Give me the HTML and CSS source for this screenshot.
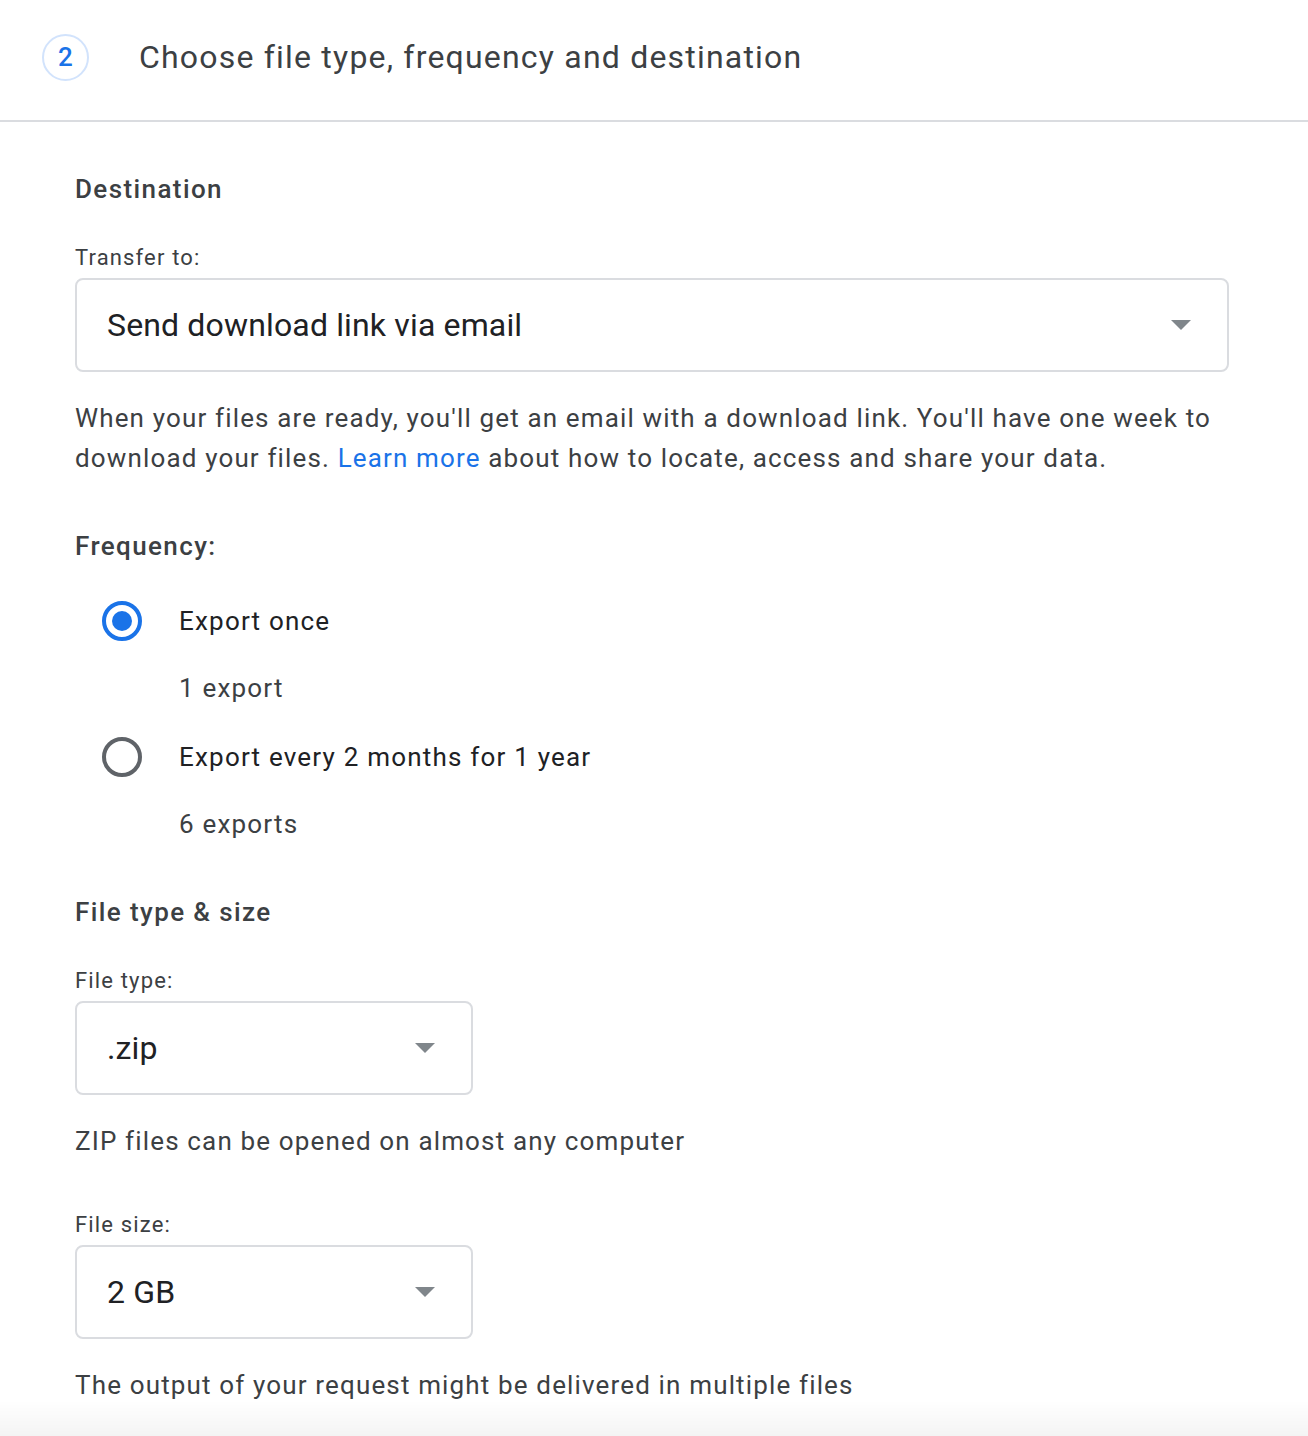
FILE: index.html
```html
<!DOCTYPE html>
<html lang="en">
<head>
<meta charset="utf-8">
<title>Choose file type, frequency and destination</title>
<link rel="stylesheet" href="styles.css">
</head>
<body>
<header class="step-header">
  <div class="step-num">2</div>
  <h1 class="step-title">Choose file type, frequency and destination</h1>
</header>
<main class="content">
  <h2 class="section-title">Destination</h2>
  <div class="field-label">Transfer to:</div>
  <div class="select select-wide">
    <span class="select-value">Send download link via email</span>
    <span class="caret"></span>
  </div>
  <p class="desc">When your files are ready, you'll get an email with a download link. You'll have one week to download your files. <a class="link" href="#">Learn more</a> about how to locate, access and share your data.</p>

  <h2 class="section-title freq-title">Frequency:</h2>
  <div class="radio-list">
    <div class="radio-row">
      <span class="radio radio-on"></span>
      <span class="radio-label">Export once</span>
    </div>
    <div class="radio-sub">1 export</div>
    <div class="radio-row">
      <span class="radio"></span>
      <span class="radio-label">Export every 2 months for 1 year</span>
    </div>
    <div class="radio-sub">6 exports</div>
  </div>

  <h2 class="section-title type-title">File type &amp; size</h2>
  <div class="field-label">File type:</div>
  <div class="select select-narrow">
    <span class="select-value">.zip</span>
    <span class="caret"></span>
  </div>
  <p class="desc">ZIP files can be opened on almost any computer</p>

  <div class="field-label size-label">File size:</div>
  <div class="select select-narrow">
    <span class="select-value">2 GB</span>
    <span class="caret"></span>
  </div>
  <p class="desc">The output of your request might be delivered in multiple files</p>
</main>
<div class="bottom-shade"></div>
</body>
</html>
```

FILE: styles.css
```css
* { box-sizing: border-box; }
html, body { margin: 0; padding: 0; background: #fff; }
body {
  font-family: Roboto, "Noto Sans", Arial, sans-serif;
  color: #3c4043;
  width: 1308px;
  min-height: 1436px;
}
.step-header {
  height: 122px;
  display: flex;
  align-items: center;
  padding-left: 42px;
  border-bottom: 2px solid #dadce0;
  padding-bottom: 6px;
}
.step-num {
  width: 47px;
  height: 47px;
  border: 2px solid #d2e3fc;
  border-radius: 50%;
  display: flex;
  align-items: center;
  justify-content: center;
  color: #1a73e8;
  font-size: 26px;
  font-weight: 500;
}
.step-title {
  margin: 0 0 0 50px;
  font-size: 32px;
  font-weight: 400;
  color: #3c4043;
  letter-spacing: 1.2px;
}
.content {
  padding: 49px 79px 0 75px;
}
.section-title {
  margin: 0;
  font-size: 26px;
  line-height: 36px;
  font-weight: 500;
  color: #3c4043;
  letter-spacing: 1.4px;
}
.field-label {
  margin-top: 35px;
  font-size: 22px;
  line-height: 32px;
  color: #3c4043;
  letter-spacing: 1.15px;
}
.select {
  margin-top: 4px;
  height: 94px;
  border: 2px solid #dadce0;
  border-radius: 8px;
  display: flex;
  align-items: center;
  justify-content: space-between;
  padding: 0 36px 0 30px;
}
.select-wide { width: 1154px; }
.select-narrow { width: 398px; }
.select-value {
  font-size: 32px;
  color: #202124;
  letter-spacing: 0.15px;
}
.caret {
  width: 0;
  height: 0;
  border-left: 10px solid transparent;
  border-right: 10px solid transparent;
  border-top: 10px solid #80868b;
}
.desc {
  margin: 26px 0 0;
  font-size: 26px;
  line-height: 40px;
  color: #3c4043;
  letter-spacing: 1.15px;
}
.link { color: #1a73e8; text-decoration: none; }
.freq-title { margin-top: 50px; }
.radio-list {
  margin-top: 33px;
  padding-left: 27px;
}
.radio-row {
  display: flex;
  align-items: center;
  height: 48px;
}
.radio {
  width: 40px;
  height: 40px;
  border: 4px solid #5f6368;
  border-radius: 50%;
  display: flex;
  align-items: center;
  justify-content: center;
  margin-right: 37px;
  flex: none;
}
.radio-on { border-color: #1a73e8; }
.radio-on::after {
  content: "";
  width: 20px;
  height: 20px;
  border-radius: 50%;
  background: #1a73e8;
}
.radio-label {
  font-size: 26px;
  color: #202124;
  letter-spacing: 1.2px;
}
.radio-sub {
  margin: 25px 0 27px 77px;
  font-size: 26px;
  line-height: 36px;
  color: #3c4043;
  letter-spacing: 1.2px;
}
.radio-sub:last-child { margin-bottom: 0; }
.type-title { margin-top: 52px; }
.size-label { margin-top: 48px; }
.bottom-shade {
  position: fixed;
  left: 0;
  right: 0;
  bottom: 0;
  height: 36px;
  background: linear-gradient(rgba(0,0,0,0), rgba(0,0,0,0.045));
  pointer-events: none;
}
```
